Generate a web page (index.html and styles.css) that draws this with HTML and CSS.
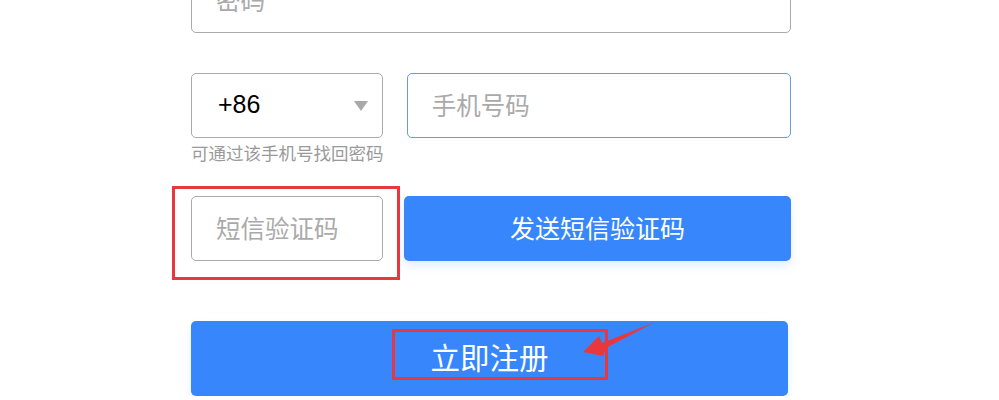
FILE: index.html
```html
<!DOCTYPE html>
<html lang="zh-CN">
<head>
<meta charset="utf-8">
<title>注册</title>
<link rel="stylesheet" href="styles.css">
</head>
<body>
<form class="form">
  <div class="input input-password"><span class="placeholder">密码</span></div>

  <div class="row row-phone">
    <div class="input select">
      <span class="value">+86</span>
      <span class="caret"></span>
    </div>
    <div class="input input-phone focused"><span class="placeholder">手机号码</span></div>
  </div>
  <div class="hint">可通过该手机号找回密码</div>

  <div class="row row-sms">
    <div class="sms-wrap">
      <div class="input input-sms"><span class="placeholder">短信验证码</span></div>
      <div class="mark mark-sms"></div>
    </div>
    <button type="button" class="btn btn-send">发送短信验证码</button>
  </div>

  <div class="register-wrap">
    <button type="button" class="btn btn-register">立即注册</button>
    <div class="mark mark-register"></div>
    <svg class="arrow" width="90" height="40" viewBox="0 0 90 40">
      <polygon points="2,31 18,15 21,22 74,1 25,27 22,35" fill="#e8383d"/>
    </svg>
  </div>
</form>
</body>
</html>
```
FILE: styles.css
```css
html, body {
  margin: 0;
  padding: 0;
  background: #ffffff;
  overflow: hidden;
}

body {
  font-family: "Liberation Sans", "Noto Sans CJK SC", sans-serif;
}

.form {
  width: 600px;
  margin: -32px 0 0 191px;
  position: relative;
}

.input {
  box-sizing: border-box;
  height: 65px;
  border: 1px solid #ababab;
  border-radius: 5px;
  background: #fff;
  display: flex;
  align-items: center;
  padding-left: 24px;
  padding-bottom: 2px;
  font-size: 24.5px;
}

.placeholder {
  color: #aaaaaa;
}

.input-password {
  width: 600px;
}

.row {
  display: flex;
}

.row-phone {
  margin-top: 40px;
  gap: 24px;
}

.select {
  width: 192px;
  justify-content: space-between;
  padding-right: 14px;
  padding-left: 26px;
}

.value {
  color: #000;
  font-size: 25px;
}

.caret {
  width: 0;
  height: 0;
  border-left: 7px solid transparent;
  border-right: 7px solid transparent;
  border-top: 10px solid #a9a9a9;
  margin-top: 3px;
}

.input-phone {
  width: 385px;
}

.input-phone.focused {
  border-color: #6a9bd6;
}

.hint {
  margin-top: 4px;
  font-size: 17.5px;
  line-height: 24px;
  color: #9a9a9a;
}

.row-sms {
  margin-top: 30px;
  gap: 21px;
}

.sms-wrap {
  position: relative;
}

.input-sms {
  width: 192px;
}

.btn {
  border: none;
  border-radius: 5px;
  background: #3886fc;
  color: #fff;
  font-family: "Liberation Sans", "Noto Sans CJK SC", sans-serif;
  cursor: pointer;
  padding: 0;
}

.btn-send {
  width: 387px;
  height: 65px;
  font-size: 25px;
  padding-bottom: 3px;
  box-shadow: 0 5px 10px rgba(56, 134, 252, 0.14);
}

.register-wrap {
  position: relative;
  margin-top: 60px;
  width: 597px;
}

.btn-register {
  display: block;
  width: 597px;
  height: 75px;
  font-size: 29.5px;
  padding-bottom: 5px;
  box-shadow: 0 4px 8px rgba(56, 134, 252, 0.12);
}

.mark {
  position: absolute;
  box-sizing: border-box;
  border: 3px solid #e8383d;
  pointer-events: none;
}

.mark-sms {
  left: -19px;
  top: -10px;
  width: 228px;
  height: 94px;
}

.mark-register {
  left: 201px;
  top: 8px;
  width: 216px;
  height: 51px;
}

.arrow {
  position: absolute;
  left: 390px;
  top: 0px;
}
```
